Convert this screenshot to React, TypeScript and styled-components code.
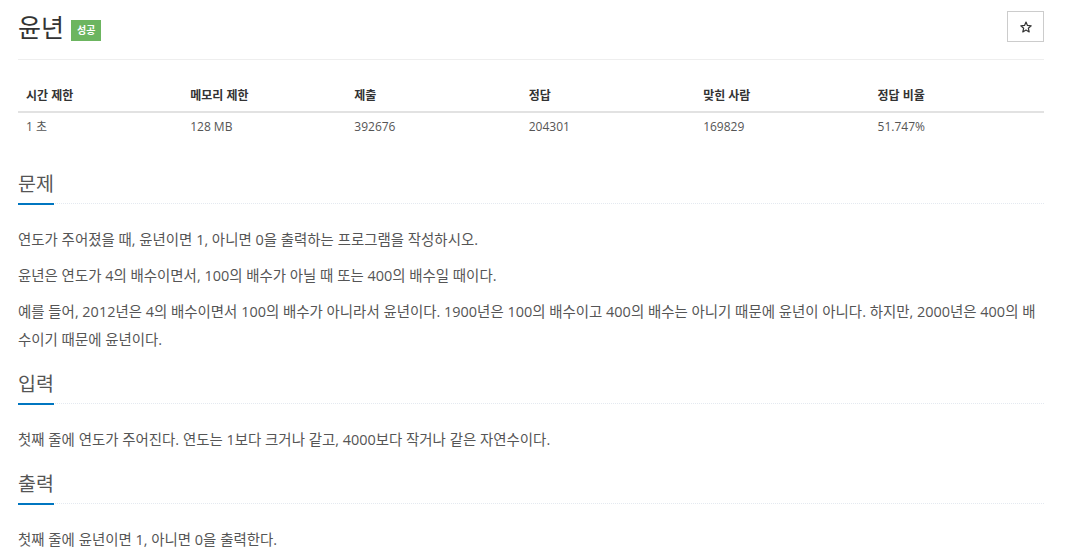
import styled, { createGlobalStyle } from "styled-components";

const GlobalStyle = createGlobalStyle`
  body {
    margin: 0;
    background: #fff;
    font-family: "Open Sans", "Noto Sans CJK KR", sans-serif;
    color: #555;
  }
`;

const columns = [
  { label: "시간 제한", value: "1 초", width: "16%" },
  { label: "메모리 제한", value: "128 MB", width: "16%" },
  { label: "제출", value: "392676", width: "17%" },
  { label: "정답", value: "204301", width: "17%" },
  { label: "맞힌 사람", value: "169829", width: "17%" },
  { label: "정답 비율", value: "51.747%", width: "17%" },
];

const sections = [
  {
    title: "문제",
    paragraphs: [
      "연도가 주어졌을 때, 윤년이면 1, 아니면 0을 출력하는 프로그램을 작성하시오.",
      "윤년은 연도가 4의 배수이면서, 100의 배수가 아닐 때 또는 400의 배수일 때이다.",
      "예를 들어, 2012년은 4의 배수이면서 100의 배수가 아니라서 윤년이다. 1900년은 100의 배수이고 400의 배수는 아니기 때문에 윤년이 아니다. 하지만, 2000년은 400의 배수이기 때문에 윤년이다.",
    ],
  },
  {
    title: "입력",
    paragraphs: ["첫째 줄에 연도가 주어진다. 연도는 1보다 크거나 같고, 4000보다 작거나 같은 자연수이다."],
  },
  {
    title: "출력",
    paragraphs: ["첫째 줄에 윤년이면 1, 아니면 0을 출력한다."],
  },
];

const App = () => {
  return (
    <Page>
      <GlobalStyle />
      <Header>
        <TitleGroup>
          <Title>윤년</Title>
          <Badge>성공</Badge>
        </TitleGroup>
        <StarButton type="button" aria-label="즐겨찾기">
          <svg width="12" height="12" viewBox="0 0 24 24">
            <polygon
              points="12,2 14.9,8.9 22.4,9.6 16.7,14.6 18.4,21.9 12,18.1 5.6,21.9 7.3,14.6 1.6,9.6 9.1,8.9"
              fill="none"
              stroke="#333"
              strokeWidth="2.4"
              strokeLinejoin="round"
            />
          </svg>
        </StarButton>
      </Header>

      <InfoTable>
        <thead>
          <tr>
            {columns.map((c) => (
              <Th key={c.label} $width={c.width}>
                {c.label}
              </Th>
            ))}
          </tr>
        </thead>
        <tbody>
          <tr>
            {columns.map((c) => (
              <Td key={c.label}>{c.value}</Td>
            ))}
          </tr>
        </tbody>
      </InfoTable>

      {sections.map((s) => (
        <Section key={s.title}>
          <Headline>
            <HeadlineTitle>{s.title}</HeadlineTitle>
          </Headline>
          {s.paragraphs.map((p, i) => (
            <Para key={i}>{p}</Para>
          ))}
        </Section>
      ))}
    </Page>
  );
};

const Page = styled.div`
  padding: 0 24px 20px 18px;
`;

const Header = styled.div`
  display: flex;
  justify-content: space-between;
  align-items: center;
  padding: 11px 0 17px;
  border-bottom: 1px solid #eee;
`;

const TitleGroup = styled.div`
  display: flex;
  align-items: center;
`;

const Title = styled.h1`
  margin: 0;
  font-size: 25px;
  font-weight: 400;
  line-height: 30px;
  color: #333;
`;

const Badge = styled.span`
  display: inline-block;
  margin: 8px 0 0 7px;
  padding: 0 6px;
  height: 21px;
  line-height: 21px;
  background: #6cb560;
  color: #fff;
  font-size: 10px;
  font-weight: 700;
`;

const StarButton = styled.button`
  display: flex;
  align-items: center;
  justify-content: center;
  width: 37px;
  height: 31px;
  padding: 0;
  background: #fff;
  border: 1px solid #ccc;
  border-radius: 0;
`;

const InfoTable = styled.table`
  width: 100%;
  border-collapse: collapse;
  margin: 20px 0 27px;
  font-size: 12px;
`;

const Th = styled.th<{ $width: string }>`
  width: ${({ $width }) => $width};
  padding: 8px 8px 7px;
  line-height: 16px;
  text-align: left;
  font-weight: 700;
  color: #333;
  border-bottom: 2px solid #e2e2e2;
`;

const Td = styled.td`
  padding: 6px 8px 8px;
  line-height: 16px;
  color: #555;
`;

const Section = styled.section`
  margin-bottom: 16px;
`;

const Headline = styled.div`
  border-bottom: 1px dotted #e4e9f0;
  margin-bottom: 22px;
`;

const HeadlineTitle = styled.h2`
  display: inline-block;
  margin: 0 0 -2px;
  padding-bottom: 5px;
  border-bottom: 2px solid #0076c0;
  font-size: 19.5px;
  font-weight: 400;
  line-height: 28px;
  color: #555;
`;

const Para = styled.p`
  margin: 0 0 8px;
  font-size: 14.45px;
  line-height: 28px;
`;

export default App;
